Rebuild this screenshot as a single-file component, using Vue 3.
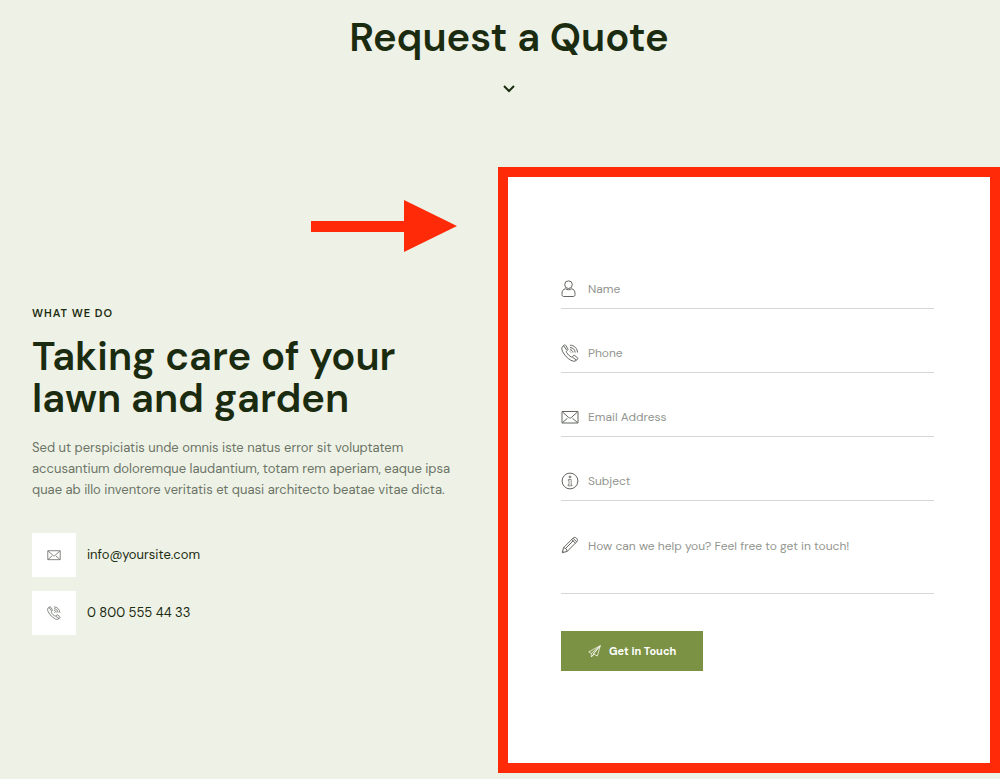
<script setup>
import { reactive } from 'vue'

const fields = [
  { id: 'name', type: 'text', label: 'Name', icon: 'user' },
  { id: 'phone', type: 'tel', label: 'Phone', icon: 'phone' },
  { id: 'email', type: 'email', label: 'Email Address', icon: 'mail' },
  { id: 'subject', type: 'text', label: 'Subject', icon: 'info' },
]
const form = reactive({ name: '', phone: '', email: '', subject: '', message: '' })
</script>

<template>
  <svg class="sprite" aria-hidden="true">
    <symbol id="icon-user" viewBox="0 0 18 18">
      <circle cx="7.5" cy="4.7" r="3.8" />
      <path d="M4.6 8.800C2.100 9 1 11 1 13.500v1.200c0 1.200.7 1.800 1.800 1.800h9.400c1.100 0 1.800-.6 1.800-1.800v-1.200C14 11 12.900 9 10.400 8.800C8.700 10.100 6.300 10.100 4.600 8.800z" />
    </symbol>
    <symbol id="icon-phone" viewBox="0 0 18 18">
      <path d="M3.200 1.200 1.400 2.600C.3 4 .8 6.500 2.400 9c1.700 2.800 4.100 5.200 6.900 6.900 2.500 1.500 4.500 1.700 5.800.6l1.500-1.500c.4-.5.3-1-.2-1.400l-2.700-2c-.5-.4-1.100-.3-1.500.2l-.8 1c-.4.4-.9.400-1.400.1-1.900-1.200-3.300-2.600-4.500-4.500-.3-.5-.2-1 .2-1.400l.9-.8c.5-.4.5-.9.200-1.400L4.800 1.500c-.4-.6-1-.7-1.600-.3zM2.600 1.800l3.200 4.400M11.400 13.200l4.300 3" />
      <path d="M9 1.200c4.200 0 7.300 3.200 7.500 7.300M9 3.500c2.900.1 5 2.200 5.200 5M9 5.700c1.600.1 2.800 1.200 2.900 2.800M9 7.500l1 1" />
    </symbol>
    <symbol id="icon-mail" viewBox="0 0 18 18">
      <path d="M1 3.500h16v11.500H1zM1.500 4l6.200 5.500c.8.7 1.800.7 2.600 0L16.500 4M1.500 14.500l5-4.200M16.500 14.500l-5-4.200" />
    </symbol>
    <symbol id="icon-info" viewBox="0 0 18 18">
      <circle cx="9" cy="9" r="7.900" />
      <circle cx="9" cy="5" r=".9" />
      <path d="M7.200 7.500h3v5.300h.8v1H7v-1h1V8.500h-.8z" stroke-width=".7" />
    </symbol>
    <symbol id="icon-pencil" viewBox="0 0 18 18">
      <path d="m1.300 16.700 1.200-5L12.300 1.900c1.900-1.800 5.400 1.500 3.700 3.600L6.200 15.400zM10.700 3.500l3.700 3.700M12 2.200l3.700 3.700M2.500 11.700c1.900.1 3.500 1.700 3.700 3.700M4.500 12.500l8-8M1.500 15.100l1.400 1.200" />
    </symbol>
    <symbol id="icon-plane" viewBox="0 0 18 18">
      <path d="M17 1 1 9.500l3.600 2.100L17 1zM17 1 7 12.300l6 2.800L17 1zM4.600 11.600v5L17 1M4.600 16.600l3.600-3.700" />
    </symbol>
  </svg>

  <main class="page">
    <header class="top">
      <h1>Request a Quote</h1>
      <svg class="chevron" viewBox="0 0 12 8" aria-hidden="true"><path d="m1 1 5 5 5-5" /></svg>
    </header>

    <div class="columns">
      <section class="about">
        <svg class="arrow" viewBox="0 0 146 52" aria-hidden="true"><path d="M0 21h93V0l53 26-53 26V32H0z" /></svg>
        <p class="eyebrow">WHAT WE DO</p>
        <h2>Taking care of your<br />lawn and garden</h2>
        <p class="intro">
          Sed ut perspiciatis unde omnis iste natus error sit voluptatem<br />
          accusantium doloremque laudantium, totam rem aperiam, eaque ipsa<br />
          quae ab illo inventore veritatis et quasi architecto beatae vitae dicta.
        </p>
        <a class="contact" href="mailto:info@yoursite.com">
          <span class="tile"><svg class="icon small"><use href="#icon-mail" /></svg></span>
          info@yoursite.com
        </a>
        <a class="contact" href="tel:08005554433">
          <span class="tile"><svg class="icon small"><use href="#icon-phone" /></svg></span>
          0 800 555 44 33
        </a>
      </section>

      <form class="quote" @submit.prevent>
        <div v-for="f in fields" :key="f.id" class="field">
          <label :for="f.id" :aria-label="f.label"><svg class="icon"><use :href="'#icon-' + f.icon" /></svg></label>
          <input :id="f.id" v-model="form[f.id]" :type="f.type" :placeholder="f.label" />
        </div>
        <div class="field message">
          <label for="message" aria-label="Message"><svg class="icon"><use href="#icon-pencil" /></svg></label>
          <textarea id="message" v-model="form.message" placeholder="How can we help you? Feel free to get in touch!"></textarea>
        </div>
        <button type="submit"><svg class="icon send"><use href="#icon-plane" /></svg>Get in Touch</button>
      </form>
    </div>
  </main>
</template>

<style>
body {
  background: #eef2e6;
}
</style>

<style scoped>
.sprite {
  position: absolute;
  width: 0;
  height: 0;
}
.page {
  padding-bottom: 6px;
  background: #eef2e6;
  color: #1a2b10;
  font-family: "DM Sans", Inter, sans-serif;
}
.top {
  display: flex;
  flex-direction: column;
  align-items: center;
  gap: 23px;
  padding: 12px 0 74px 18px;
}
h1,
h2,
p {
  margin: 0;
}
h1 {
  font-size: 40px;
  font-weight: 600;
  line-height: 50px;
}
.chevron {
  width: 12px;
  height: 8px;
  fill: none;
  stroke: #1a2b10;
  stroke-width: 2;
}
.columns {
  display: grid;
  grid-template-columns: 498fr 502fr;
}
.about {
  position: relative;
  display: flex;
  flex-direction: column;
  align-items: flex-start;
  justify-content: center;
  padding-left: 32px;
}
.arrow {
  position: absolute;
  top: 33px;
  right: 41px;
  width: 146px;
  height: 52px;
  fill: #ff2a08;
}
.eyebrow {
  font-size: 11px;
  font-weight: 600;
  letter-spacing: 1px;
  line-height: 14px;
}
h2 {
  margin-top: 15px;
  font-size: 40px;
  font-weight: 600;
  line-height: 42px;
  white-space: nowrap;
}
.intro {
  margin-top: 18px;
  color: #6c7466;
  font-size: 13px;
  line-height: 21px;
  white-space: nowrap;
}
.contact {
  display: flex;
  align-items: center;
  gap: 11px;
  margin-top: 14px;
  color: #1a2b10;
  font-size: 13px;
  text-decoration: none;
}
.intro + .contact {
  margin-top: 33px;
}
.tile {
  display: flex;
  align-items: center;
  justify-content: center;
  width: 44px;
  height: 44px;
  background: #fff;
}
.icon {
  display: block;
  width: 18px;
  height: 18px;
  fill: none;
  stroke: #62665f;
  stroke-width: 1;
  stroke-linejoin: round;
}
.small {
  width: 14px;
  height: 14px;
}
.quote {
  padding: 92px 56px 92px 53px;
  border: 10px solid #ff2a08;
  background: #fff;
}
.field {
  display: flex;
  align-items: center;
  gap: 9px;
  height: 39px;
  margin-bottom: 24px;
  border-bottom: 1px solid #d6d6d6;
}
input,
textarea {
  flex: 1;
  min-width: 0;
  height: 20px;
  padding: 0;
  border: 0;
  outline: 0;
  background: none;
  color: #1a2b10;
  font: 12px/20px "DM Sans", Inter, sans-serif;
  resize: none;
}
textarea {
  height: 48px;
}
::placeholder {
  color: #92958f;
  opacity: 1;
}
.message {
  align-items: flex-start;
  height: 57px;
  margin-bottom: 37px;
  padding-top: 11px;
}
button {
  display: flex;
  align-items: center;
  gap: 8px;
  height: 40px;
  padding: 0 27px;
  border: 0;
  background: #7b9143;
  color: #fff;
  font: 700 11px/16px "DM Sans", Inter, sans-serif;
}
.send {
  width: 13px;
  height: 13px;
  stroke: #fff;
}
</style>
